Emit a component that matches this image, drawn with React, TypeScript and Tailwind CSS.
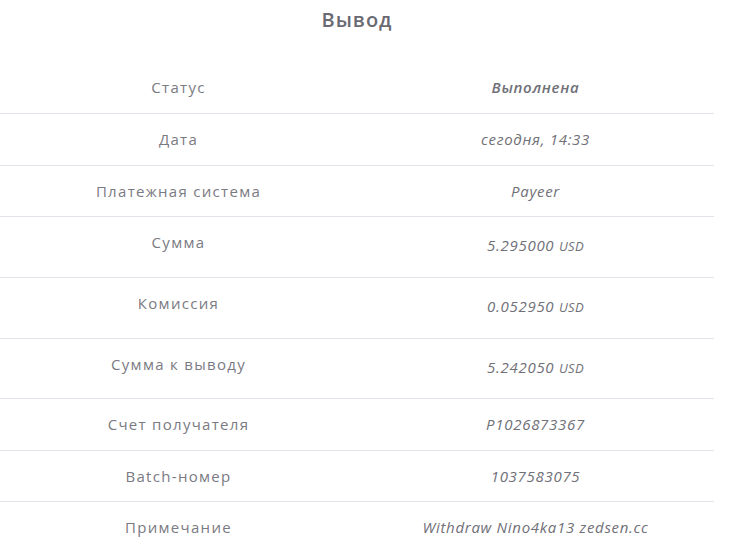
import React from "react";

type Row = { label: string; value: React.ReactNode; h: string; vpt?: string; bold?: boolean };

const usd = (n: string) => (
  <>
    {n} <span className="text-[13px] tracking-[0.3px]">USD</span>
  </>
);

const rows: Row[] = [
  { label: "Статус", value: "Выполнена", h: "h-[52px]", bold: true },
  { label: "Дата", value: "сегодня, 14:33", h: "h-[52px]" },
  { label: "Платежная система", value: "Payeer", h: "h-[51px]" },
  { label: "Сумма", value: usd("5.295000"), h: "h-[61px]", vpt: "pt-[18px]" },
  { label: "Комиссия", value: usd("0.052950"), h: "h-[61px]", vpt: "pt-[18px]" },
  { label: "Сумма к выводу", value: usd("5.242050"), h: "h-[60px]", vpt: "pt-[18px]" },
  { label: "Счет получателя", value: "P1026873367", h: "h-[52px]" },
  { label: "Batch-номер", value: "1037583075", h: "h-[51px]" },
  { label: "Примечание", value: "Withdraw Nino4ka13 zedsen.cc", h: "h-[47px]" },
];

export default function App() {
  return (
    <div
      className="w-[750px] h-[548px] bg-white overflow-hidden"
      style={{ fontFamily: '"Open Sans", "Noto Sans", sans-serif' }}
    >
      <div className="w-[714px]">
        <div className="h-[62px] flex justify-center pt-[7px]">
          <h1 className="text-[20px] leading-[26px] font-semibold text-[#6a6a72] tracking-[1px]">Вывод</h1>
        </div>
        {rows.map((r, i) => (
          <div
            key={i}
            className={`grid grid-cols-2 ${r.h} ${i < rows.length - 1 ? "border-b border-[#e3e3ea]" : ""}`}
          >
            <div className="flex justify-center pt-[15px] text-[15px] leading-[20px] text-[#7a7a82] tracking-[1.3px]">
              {r.label}
            </div>
            <div
              className={`flex justify-center ${r.vpt ?? "pt-[15px]"} text-[15px] leading-[20px] italic text-[#707078] tracking-[0.7px] ${r.bold ? "font-semibold" : ""}`}
            >
              <span>{r.value}</span>
            </div>
          </div>
        ))}
      </div>
    </div>
  );
}
